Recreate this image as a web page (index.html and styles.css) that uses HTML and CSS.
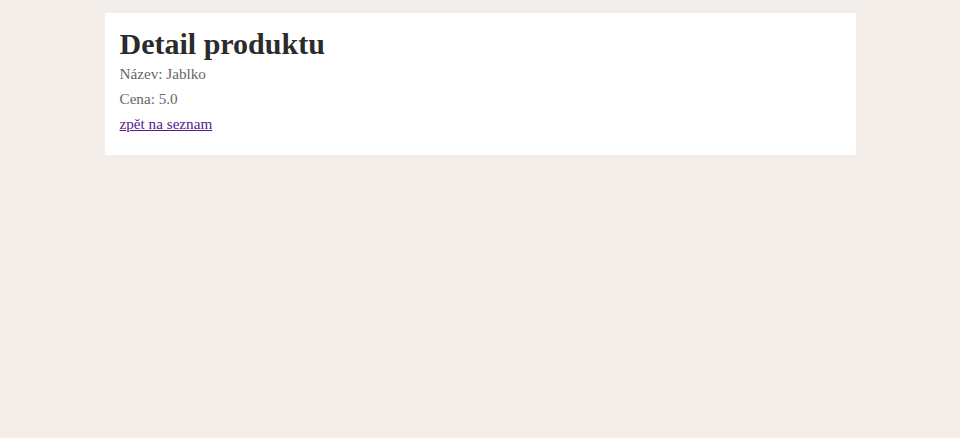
FILE: index.html
```html
<!DOCTYPE html>
<html lang="cs">
<head>
<meta charset="utf-8">
<title>Detail produktu</title>
<link rel="stylesheet" href="styles.css">
</head>
<body>
<main class="card">
  <h1 class="title">Detail produktu</h1>
  <p class="line">Název: Jablko</p>
  <p class="line">Cena: 5.0</p>
  <a class="back" href="#">zpět na seznam</a>
</main>
</body>
</html>
```
FILE: styles.css
```css
html, body { margin: 0; padding: 0; }
body {
  background: #f3eee9;
  font-family: "Liberation Serif", "Times New Roman", serif;
  padding-top: 13px;
}
.card {
  display: block;
  width: 751px;
  box-sizing: border-box;
  margin: 0 auto;
  background: #fff;
  padding: 14px 15px 22px;
}
.title {
  margin: 0 0 4px;
  font-size: 30px;
  line-height: 34px;
  color: #2b2b2b;
  font-weight: bold;
}
.line {
  margin: 0 0 7px;
  font-size: 15.2px;
  line-height: 18px;
  color: #666;
}
.back {
  display: inline-block;
  font-size: 15.2px;
  line-height: 18px;
  color: #551a8b;
}
```
